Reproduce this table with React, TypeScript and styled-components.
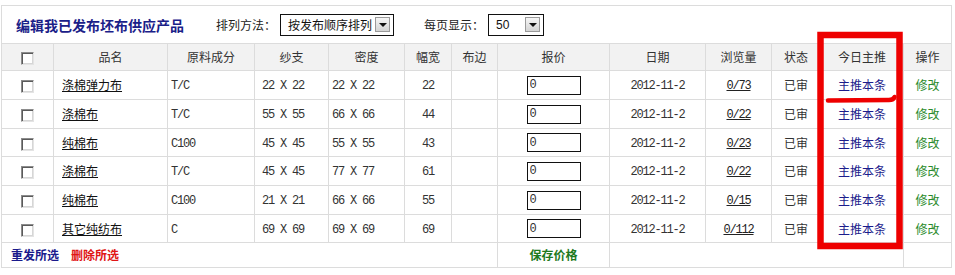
import React from 'react';
import styled, { createGlobalStyle } from 'styled-components';

const GlobalStyle = createGlobalStyle`
  html, body { margin: 0; padding: 0; background: #fff; }
  body {
    font-family: "Noto Sans CJK SC", "Liberation Sans", sans-serif;
    font-size: 12px;
    color: #333;
  }
`;

const Page = styled.div`
  position: relative;
  width: 955px;
  height: 275px;
  padding: 5px 0 0 1px;
  box-sizing: border-box;
`;

const Table = styled.table`
  width: 950px;
  border-collapse: collapse;
  table-layout: fixed;
  border: 1px solid #dcdcdc;
`;

const TitleRow = styled.tr`
  height: 38px;
`;

const TitleCell = styled.td`
  padding: 0 0 0 14px;
  vertical-align: middle;
`;

const TitleBar = styled.div`
  display: flex;
  align-items: center;
`;

const Title = styled.h1`
  margin: 0 32px 0 0;
  font-size: 14px;
  font-weight: bold;
  line-height: 18px;
  color: #1a2088;
`;

const Label = styled.span`
  font-size: 12px;
  line-height: 16px;
  color: #222;
  margin-right: 4px;
`;

const Select = styled.div<{ $w: number; $gap: number }>`
  display: flex;
  align-items: center;
  justify-content: space-between;
  box-sizing: border-box;
  width: ${p => p.$w}px;
  height: 22px;
  border: 1px solid #111;
  padding: 0 3px 0 7px;
  margin-right: ${p => p.$gap}px;
  font-size: 12px;
  line-height: 16px;
  color: #111;
  background: #fff;
`;

const SelectValue = styled.span<{ $mono?: boolean }>`
  font-family: ${p => (p.$mono ? '"Liberation Sans", sans-serif' : 'inherit')};
`;

const ArrowBox = styled.span`
  display: flex;
  align-items: center;
  justify-content: center;
  box-sizing: border-box;
  width: 15px;
  height: 15px;
  border: 1px solid #9a9a9a;
  background: linear-gradient(#f6f6f6, #d4d4d4);
  &::after {
    content: '';
    border-left: 4px solid transparent;
    border-right: 4px solid transparent;
    border-top: 4px solid #111;
  }
`;

const HeadRow = styled.tr`
  height: 27px;
  background: #f2f2f2;
`;

const Th = styled.th`
  border: 1px solid #dcdcdc;
  padding: 0;
  font-weight: normal;
  font-size: 12px;
  line-height: 16px;
  color: #333;
  text-align: center;
  vertical-align: middle;
`;

const DataRow = styled.tr<{ $h: number }>`
  height: ${p => p.$h}px;
`;

const Td = styled.td<{ $align?: string; $pad?: number }>`
  border: 1px solid #dcdcdc;
  padding: 0 0 0 ${p => p.$pad ?? 0}px;
  text-align: ${p => p.$align ?? 'center'};
  vertical-align: middle;
  font-size: 12px;
  line-height: 16px;
  color: #333;
  white-space: nowrap;
  overflow: hidden;
`;

const Mono = styled.span`
  font-family: "Liberation Mono", "DejaVu Sans Mono", monospace;
  font-size: 12px;
  letter-spacing: -1.2px;
  color: #333;
`;

const MonoLink = styled(Mono)`
  color: #222;
  text-decoration: underline;
`;

const NameLink = styled.a`
  color: #111;
  text-decoration: underline;
  cursor: pointer;
`;

const Check = styled.span`
  display: inline-block;
  vertical-align: middle;
  box-sizing: border-box;
  width: 13px;
  height: 13px;
  border: 1px solid;
  border-color: #8c8c8c #e4e4e4 #e4e4e4 #8c8c8c;
  box-shadow: inset 1px 1px 0 #5a5a5a, inset -1px -1px 0 #d6d6d6;
  background: #fff;
`;

const PriceInput = styled.input`
  box-sizing: border-box;
  width: 54px;
  height: 19px;
  border: 1px solid #111;
  padding: 0 0 0 2px;
  margin: 0;
  vertical-align: middle;
  font-family: "Liberation Mono", "DejaVu Sans Mono", monospace;
  font-size: 12px;
  line-height: 17px;
  color: #333;
  outline: none;
`;

const Action = styled.a<{ $color: string; $bold?: boolean }>`
  color: ${p => p.$color};
  font-weight: ${p => (p.$bold ? 'bold' : 'normal')};
  text-decoration: none;
  cursor: pointer;
`;

const FootRow = styled.tr`
  height: 25px;
`;

const FootActions = styled.div`
  display: flex;
  gap: 12px;
  padding-left: 9px;
`;

const Overlay = styled.svg`
  position: absolute;
  left: 0;
  top: 0;
  width: 955px;
  height: 275px;
  pointer-events: none;
`;

const widths = [52, 114, 87, 74, 76, 47, 46, 112, 96, 66, 49, 83, 48];
const headers = ['', '品名', '原料成分', '纱支', '密度', '幅宽', '布边', '报价', '日期', '浏览量', '状态', '今日主推', '操作'];

const rows = [
  { name: '涤棉弹力布', mat: 'T/C', yarn: '22 X 22', density: '22 X 22', width: '22', views: '0/73', h: 29 },
  { name: '涤棉布', mat: 'T/C', yarn: '55 X 55', density: '66 X 66', width: '44', views: '0/22', h: 29 },
  { name: '纯棉布', mat: 'C100', yarn: '45 X 45', density: '55 X 55', width: '43', views: '0/23', h: 28 },
  { name: '涤棉布', mat: 'T/C', yarn: '45 X 45', density: '77 X 77', width: '61', views: '0/22', h: 29 },
  { name: '纯棉布', mat: 'C100', yarn: '21 X 21', density: '66 X 66', width: '55', views: '0/15', h: 29 },
  { name: '其它纯纺布', mat: 'C', yarn: '69 X 69', density: '69 X 69', width: '69', views: '0/112', h: 28 },
];

export default function App() {
  return (
    <Page>
      <GlobalStyle />
      <Table>
        <colgroup>
          {widths.map((w, i) => (
            <col key={i} style={{ width: w }} />
          ))}
        </colgroup>
        <tbody>
          <TitleRow>
            <TitleCell colSpan={13}>
              <TitleBar>
                <Title>编辑我已发布坯布供应产品</Title>
                <Label>排列方法：</Label>
                <Select $w={114} $gap={30}>
                  <span>按发布顺序排列</span>
                  <ArrowBox />
                </Select>
                <Label>每页显示：</Label>
                <Select $w={56} $gap={0}>
                  <SelectValue $mono>50</SelectValue>
                  <ArrowBox />
                </Select>
              </TitleBar>
            </TitleCell>
          </TitleRow>
          <HeadRow>
            {headers.map((h, i) => (
              <Th key={i}>{i === 0 ? <Check /> : h}</Th>
            ))}
          </HeadRow>
          {rows.map((r, i) => (
            <DataRow key={i} $h={r.h}>
              <Td><Check /></Td>
              <Td $align="left" $pad={8}><NameLink>{r.name}</NameLink></Td>
              <Td $align="left" $pad={3}><Mono>{r.mat}</Mono></Td>
              <Td $align="left" $pad={7}><Mono>{r.yarn}</Mono></Td>
              <Td $align="left" $pad={3}><Mono>{r.density}</Mono></Td>
              <Td><Mono>{r.width}</Mono></Td>
              <Td />
              <Td><PriceInput readOnly defaultValue="0" /></Td>
              <Td><Mono>2012-11-2</Mono></Td>
              <Td><MonoLink>{r.views}</MonoLink></Td>
              <Td>已审</Td>
              <Td><Action $color="#1c1c8c">主推本条</Action></Td>
              <Td><Action $color="#2a8a2a">修改</Action></Td>
            </DataRow>
          ))}
          <FootRow>
            <Td colSpan={7} $align="left">
              <FootActions>
                <Action $color="#1a1a8c" $bold>重发所选</Action>
                <Action $color="#e01515" $bold>删除所选</Action>
              </FootActions>
            </Td>
            <Td><Action $color="#1e7a1e" $bold>保存价格</Action></Td>
            <Td colSpan={4} />
            <Td />
          </FootRow>
        </tbody>
      </Table>
      <Overlay viewBox="0 0 955 275">
        <rect x="820.5" y="35" width="79" height="211" fill="none" stroke="#ee0000" strokeWidth="6.5" />
        <path d="M828 100.5 L889 100 Q893.5 100 894.5 97" fill="none" stroke="#ee0000" strokeWidth="4.5" strokeLinecap="round" />
      </Overlay>
    </Page>
  );
}
